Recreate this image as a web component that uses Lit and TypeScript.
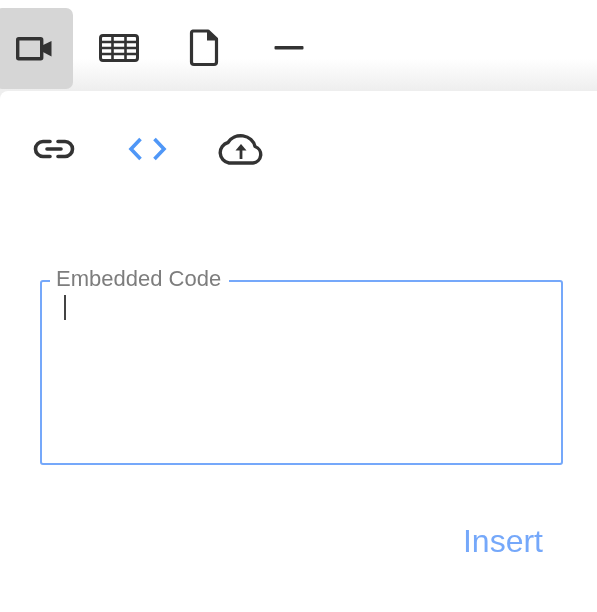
import { LitElement, html, css } from "lit";
import { customElement } from "lit/decorators.js";

@customElement("app-root")
export class AppRoot extends LitElement {
  static styles = css`
    :host { display: block; width: 597px; height: 612px; overflow: hidden; background: #fff; font-family: "Liberation Sans", Arial, sans-serif; }
    .blur { filter: blur(0.7px); height: 612px; }
    .toolbar { height: 91px; box-sizing: border-box; padding-top: 8px; display: flex; gap: 7px; margin-left: -5px;
      background: linear-gradient(#fff 0, #fff 58px, #eeeeee 91px); }
    .tb { width: 78px; height: 81px; border-radius: 7px; display: flex; align-items: center; justify-content: center; }
    .tb svg { display: block; margin-top: -1px; }
    .tb.active { background: #d6d6d6; }
    .body { background: linear-gradient(#eeeeee 8px, #fff 8px); }
    .panel { background: #fff; border-radius: 8px 0 0 0; height: 521px; box-sizing: border-box; padding: 0 34px 0 40px; display: flex; flex-direction: column; }
    .tabs { display: flex; height: 189px; margin: 0 0 0 -32px; padding-top: 34px; box-sizing: border-box; align-items: flex-start; }
    .tab { width: 92.5px; height: 48px; display: flex; align-items: center; justify-content: center; }
    .field { position: relative; width: 523px; height: 185px; box-sizing: border-box; border: 2px solid #75a8fa; border-radius: 3px; }
    .label { position: absolute; left: 8px; top: -15px; padding: 0 8px 0 6px; background: #fff; color: #7d7d7d; font-size: 22px; line-height: 24px; }
    .caret { width: 2px; height: 25px; background: #444; margin: 13px 0 0 22px; }
    .actions { display: flex; justify-content: flex-end; padding: 57px 0 0; }
    .insert { color: #75a8fa; font-size: 32px; line-height: 38px; padding-right: 20px; }
  `;

  render() {
    return html`<div class="blur">
      <div class="toolbar">
        <div class="tb active">
          <svg width="38" height="28" viewBox="0 0 38 28" fill="none" stroke="#333" stroke-width="3.4">
            <rect x="2.7" y="4.7" width="24" height="20" rx="1"></rect>
            <path d="M26 12 L36.5 7 V22.5 L26 17 Z" fill="#333" stroke="none"></path>
          </svg>
        </div>
        <div class="tb">
          <svg width="42" height="32" viewBox="0 0 42 32" fill="none" stroke="#333">
            <rect x="2.5" y="3.5" width="37" height="25" rx="2.5" stroke-width="3"></rect>
            <path d="M2 10 H40 M2 16 H40 M2 22 H40 M14.5 3 V29 M27.5 3 V29" stroke-width="2.6"></path>
          </svg>
        </div>
        <div class="tb">
          <svg width="30" height="38" viewBox="0 0 30 38" fill="none" stroke="#333" stroke-width="3.2">
            <path d="M4 2 H19 L27.5 10 V33 A2.5 2.5 0 0 1 25 35.5 H5 A2.5 2.5 0 0 1 2.5 33 V4 A2 2 0 0 1 4 2 Z" stroke-linejoin="round"></path>
            <path d="M18 2 L28 11.5 H18 Z" fill="#333" stroke="none"></path>
          </svg>
        </div>
        <div class="tb">
          <svg width="30" height="6" viewBox="0 0 30 6"><rect x="0.5" y="1" width="29" height="3.4" rx="1" fill="#333"></rect></svg>
        </div>
      </div>
      <div class="body">
      <div class="panel">
        <div class="tabs">
          <div class="tab">
            <svg width="44" height="24" viewBox="0 0 44 24" fill="none" stroke="#333" stroke-width="3.6" stroke-linecap="round">
              <path d="M18 4.5 H11 A7.5 7.5 0 0 0 11 19.5 H18"></path>
              <path d="M26 4.5 H33 A7.5 7.5 0 0 1 33 19.5 H26"></path>
              <path d="M15 12 H29"></path>
            </svg>
          </div>
          <div class="tab">
            <svg width="42" height="28" viewBox="0 0 42 28" fill="none" stroke="#4f97f7" stroke-width="3.6">
              <path d="M14.5 4 L5 14 L14.5 24"></path>
              <path d="M28.5 4 L38 14 L28.5 24"></path>
            </svg>
          </div>
          <div class="tab">
            <svg width="46" height="34" viewBox="0 0 46 34" fill="none" stroke="#333" stroke-width="3.4" stroke-linejoin="round" style="margin-left:3px">
              <path d="M11 31 H35 A8.5 8.5 0 0 0 37 14.5 A14.5 13 0 0 0 10 10.5 A10.5 10.5 0 0 0 11 31 Z"></path>
              <path d="M23 27 V15" stroke-width="2.8"></path>
              <path d="M17.5 18.5 L23 12 L28.5 18.5 Z" fill="#333" stroke="none"></path>
            </svg>
          </div>
        </div>
        <div class="field">
          <div class="label">Embedded Code</div>
          <div class="caret"></div>
        </div>
        <div class="actions"><div class="insert">Insert</div></div>
      </div>
      </div>
    </div>`;
  }
}
